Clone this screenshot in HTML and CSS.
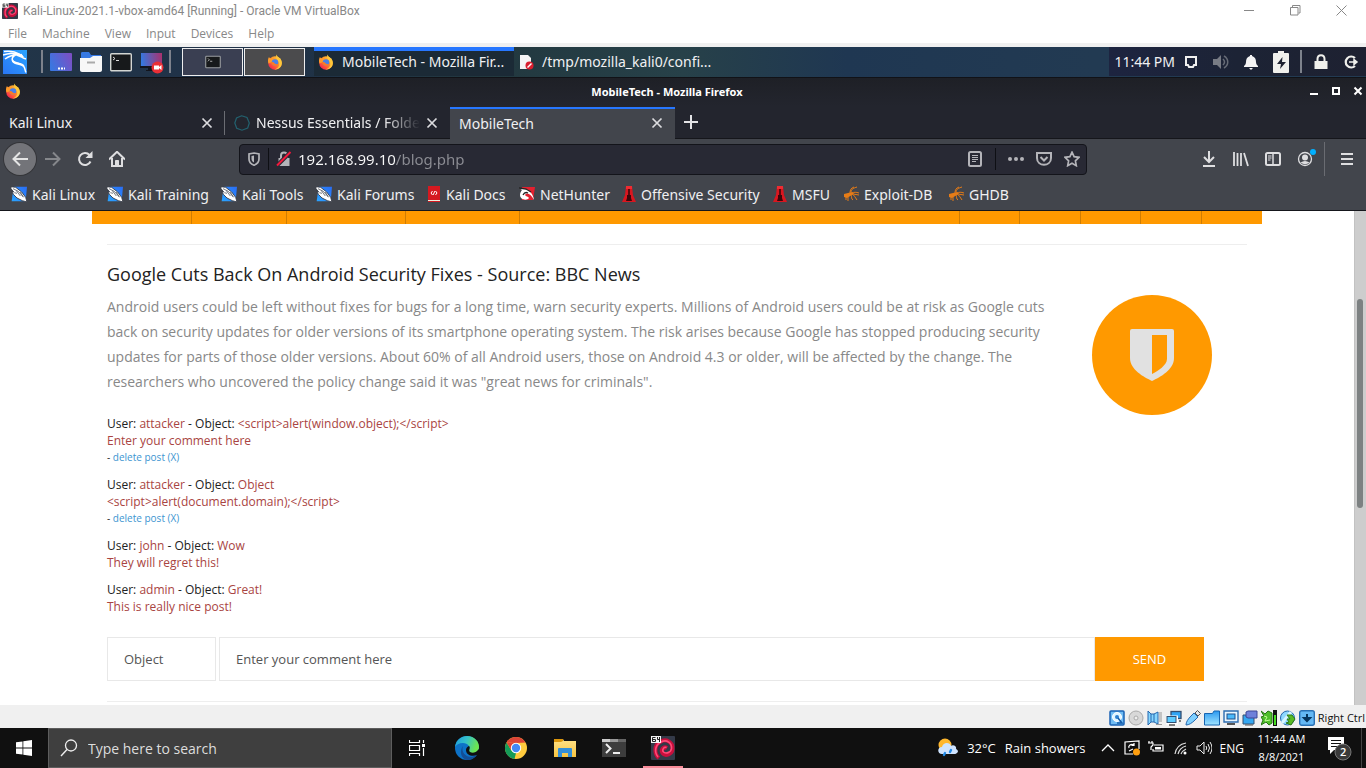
FILE: index.html
```html
<!DOCTYPE html>
<html lang="en">
<head>
<meta charset="utf-8">
<meta name="viewport" content="width=device-width, initial-scale=1">
<title>MobileTech</title>
<link rel="stylesheet" href="styles.css">
</head>
<body>
<svg class="sprite" width="0" height="0" aria-hidden="true">
  <defs>
    <linearGradient id="g-flame" x1="1" y1="0" x2="0.1" y2="1"><stop offset="0" stop-color="#ffe14d"/><stop offset=".4" stop-color="#ff9a2a"/><stop offset=".75" stop-color="#ff4a3d"/><stop offset="1" stop-color="#e5145f"/></linearGradient>
    <linearGradient id="g-kali" x1="0" y1="1" x2="1" y2="0"><stop offset="0" stop-color="#2a76f5"/><stop offset="1" stop-color="#2aa4ff"/></linearGradient>
    <linearGradient id="g-kali2" x1="0" y1="1" x2="1" y2="0"><stop offset="0" stop-color="#2aa4ff"/><stop offset="1" stop-color="#2a6cf5"/></linearGradient>
    <linearGradient id="g-desk" x1="0" y1="0.6" x2="1" y2="0.2"><stop offset="0" stop-color="#3b76e0"/><stop offset="1" stop-color="#7c4fc4"/></linearGradient>
    <linearGradient id="g-rec" x1="0" y1="0.4" x2="1" y2="0.3"><stop offset="0" stop-color="#3578e0"/><stop offset="1" stop-color="#a8326f"/></linearGradient>
    <linearGradient id="g-sky" x1="0" y1="0" x2="0" y2="1"><stop offset="0" stop-color="#2a98f0"/><stop offset="1" stop-color="#9fe4ff"/></linearGradient>
    <linearGradient id="g-edge" x1="0" y1="0" x2="1" y2="0.3"><stop offset="0" stop-color="#1c9be0"/><stop offset=".5" stop-color="#35c1c9"/><stop offset="1" stop-color="#6de650"/></linearGradient>
    <linearGradient id="g-folder" x1="0" y1="0" x2="0" y2="1"><stop offset="0" stop-color="#ffe28a"/><stop offset="1" stop-color="#f7c440"/></linearGradient>
    <symbol id="firefox" viewBox="0 0 32 32">
      <circle cx="16" cy="18" r="13.500" fill="url(#g-flame)"/>
      <path d="M19 1c1 4 4 5 7 8 5 5 5 13 0 18-3 3-8 4-11 4 8-3 11-8 9-14-1-3-4-5-5-8-1-3-1-6 0-8z" fill="#ffc83a"/>
      <path d="M4 6c1 2 3 3 5 3l3-3c0 3 1 4 4 5l-8 6-5 2C1 14 2 9 4 6z" fill="#ff9a2a"/>
      <circle cx="16" cy="17" r="6.500" fill="#4a80e8"/>
      <path d="M8 17c2-2 4-1 6 0 0 2 5 5 9 2-2 7-13 6-15-2z" fill="#ff7a22"/>
    </symbol>
    <symbol id="dragon" viewBox="0 0 24 24">
      <path d="M4 1h20l-2 22H1z" fill="url(#g-kali2)"/>
      <path d="M0 1l7 1 9 7 6 8 2 7-7-2-8-4-5-5-3-5 3 1-4-5z" fill="#fff" stroke="#323640" stroke-width="1.300"/>
      <path d="M3 4l8 4 8 9M5 10l4 1M8 7l6 8M14 9l4 7" stroke="#323640" stroke-width="1" fill="none"/>
    </symbol>
    <symbol id="tower" viewBox="0 0 14 16">
      <path d="M4 0h6l1 9 3 7H0l3-7z" fill="#d8161f"/><path d="M4 0h6v3H4z" fill="#f02b31"/>
      <path d="M7 3v10" stroke="#3a070b" stroke-width="1.600"/><path d="M5 9h4v3l1 3H4l1-3z" fill="#3a070b"/>
    </symbol>
    <symbol id="bug" viewBox="0 0 16 16">
      <path d="M1 8l4-1 4-1 2 1.500-3 2-4 2.500-3-1z" fill="#e67c17"/>
      <path d="M9 7c2-1 4-1 7 0M8 6c0-3 3-4 6-5M7 7c0-3 1-5 4-6M10 8l6 1M9 8c2 1 3 3 5 6M8 9c1 2 0 4 2 5M3 11v3M5 10v5" stroke="#e67c17" fill="none"/>
    </symbol>
    <symbol id="cross" viewBox="0 0 12 12"><path d="M1.500 1.500l9 9M10.500 1.500l-9 9" stroke="#dcdcdf" stroke-width="1.700" fill="none"/></symbol>
    <symbol id="swirl" viewBox="0 0 24 24">
      <rect width="24" height="24" rx="1" fill="#343a48"/>
      <path d="M8 22C3 18 3 9 9 6c6-4 13 0 12.500 7-.5 5-7 8-10 4-2-3 1-7 4.500-5" fill="none" stroke="#c80f3c" stroke-width="4"/>
      <path d="M7 21C3 16 4 9 10 6c6-3 11 1 10.500 6.500-.5 4-6 6-8.500 3-1-2 1-5 3.500-4" fill="none" stroke="#ff4a78" stroke-width="1.600"/>
      <rect width="10" height="7" fill="#f3f3f3"/><path d="M4.500 1.500h-3v4h3v-2h-3M6.500 1v2.500h2.500M8.500 1v5" stroke="#222" fill="none"/>
    </symbol>
  </defs>
</svg>

<div class="screen">
  <header class="vm-title">
    <svg class="i16" aria-hidden="true"><use href="#swirl"/></svg>
    <span class="vm-name">Kali-Linux-2021.1-vbox-amd64 [Running] - Oracle VM VirtualBox</span>
    <div class="vm-buttons">
      <button aria-label="Minimize"><svg class="i11" viewBox="0 0 11 11"><path d="M0 5.500h10" stroke="#888"/></svg></button>
      <button aria-label="Restore"><svg class="i11" viewBox="0 0 11 11"><path d="M.5 2.500h7.500v7.500H.5zM2.500 2V.5h7.500V8H8.500" fill="none" stroke="#888"/></svg></button>
      <button aria-label="Close"><svg class="i11" viewBox="0 0 11 11"><path d="M.5.5l10 10M10.500.5l-10 10" stroke="#888"/></svg></button>
    </div>
  </header>
  <nav class="vm-menu" aria-label="Machine window">
    <button>File</button><button>Machine</button><button>View</button><button>Input</button><button>Devices</button><button>Help</button>
  </nav>

  <div class="panel">
    <button class="kali-logo" aria-label="Applications"><svg class="i24" viewBox="0 0 24 24"><rect width="24" height="24" fill="url(#g-kali)"/><path d="M1 1.500c7-1 11 0 16 3M0 5c5-2 10-2 14-.5M2 9c4-3 8-4 12-4M14 4.500c-4 1-6 4-4 7 3 3 9 0 11 5 1 2 1 4 2 6M18 4l2 4 3 1" fill="none" stroke="#fff" stroke-width="1.500"/><path d="M14 4c3-1 5 0 7 3l-2 1-5-2z" fill="#fff"/><path d="M10 9c0 4 10 2 12 10-3-6-12-3-13-8z" fill="#fff"/></svg></button>
    <i class="rule"></i>
    <div class="launchers">
      <button aria-label="Show desktop"><svg class="i22" viewBox="0 0 22 22"><rect y="2" width="22" height="18" rx="1" fill="url(#g-desk)"/><path d="M8 17.500h2M11 17.500h2M14 17.500h1" stroke="#fff" stroke-width="2"/></svg></button>
      <button aria-label="Files"><svg class="i22" viewBox="0 0 22 22"><path d="M1 2c0-1 1-1 2-1h6l2 3h10v8H1z" fill="#3779e3"/><path d="M0 7h10l3-2h9v14c0 1-1 2-2 2H2c-1 0-2-1-2-2z" fill="#f7f7f7"/><path d="M7 11.500h8" stroke="#aaa" stroke-width="2"/></svg></button>
      <button aria-label="Terminal"><svg class="i22" viewBox="0 0 22 22"><rect x=".7" y="2.700" width="20.600" height="17" rx="1" fill="#17191b" stroke="#d3d6d3" stroke-width="1.400"/><path d="M3 6l2 1.500L3 9M6 9.500h3" fill="none" stroke="#ddd"/></svg></button>
      <button aria-label="Screen recorder"><svg class="i24" viewBox="0 0 24 24"><path d="M1 3h21v14H1z" fill="url(#g-rec)"/><path d="M0 16h22v2H0zM8 18h5v2H8zM6 20h10v1H6z" fill="#12141c"/><circle cx="17.500" cy="17.500" r="6" fill="#e92f36"/><path d="M14 15.500h5v4h-5zM19 17l2.500-2v5L19 18z" fill="#fff"/></svg></button>
    </div>
    <i class="rule"></i>
    <div class="workspaces">
      <button aria-label="Workspace 1"><svg class="i16" viewBox="0 0 22 22"><rect x="1" y="3" width="20" height="16" rx="1" fill="#17191b" stroke="#9a9da0" stroke-width="1.500"/><path d="M4 6l2 2-2 2M7 10h3" stroke="#ddd" fill="none"/></svg></button>
      <button class="current" aria-label="Workspace 2"><svg class="i16"><use href="#firefox"/></svg></button>
    </div>
    <div class="windows">
      <button class="active"><svg class="i16"><use href="#firefox"/></svg><span>MobileTech - Mozilla Fir...</span></button>
      <button><svg class="i16" viewBox="0 0 16 16"><path d="M2 1h8l3 3v11H2z" fill="#f4f4f4"/><circle cx="11.500" cy="11.500" r="4" fill="#d91e2e"/><path d="M9.500 13.500l4-4" stroke="#fff" stroke-width="1.500"/></svg><span>/tmp/mozilla_kali0/confi...</span></button>
    </div>
    <div class="tray">
      <time>11:44 PM</time>
      <svg class="i16" viewBox="0 0 16 16"><path d="M3 3h10v8h-2l-1 2H6l-1-2H3z" fill="none" stroke="#f0f0f0" stroke-width="2"/></svg>
      <svg class="i16" viewBox="0 0 16 16"><path d="M0 5h4l4-4v14l-4-4H0z" fill="#777b84"/><path d="M10 5c2 2 2 4 0 6M11 2c5 3 5 9 0 12" fill="none" stroke="#666b76" stroke-width="1.500"/></svg>
      <svg class="i16" viewBox="0 0 16 16"><path d="M7 1h2v1c3 1 4 3 4 6 0 2 1 3 2 4v1H1v-1c1-1 2-2 2-4 0-3 1-5 4-6zM6 14h4l-2 2z" fill="#f4f4f4"/></svg>
      <svg class="battery" viewBox="0 0 16 22"><path d="M1 2h4V0h6v2h4q1 0 1 1v18q0 1-1 1H1q-1 0-1-1V3q0-1 1-1z" fill="#f0f0ec"/><path d="M9.500 6L4 13h4l-1 5 6-7H9z" fill="#1e2230"/></svg>
      <i class="rule"></i>
      <svg class="i16" viewBox="0 0 16 16"><path d="M1.500 7h13v8h-13z" fill="#f0f0ec"/><path d="M4.500 8V5c0-5 7-5 7 0v3" fill="none" stroke="#f0f0ec" stroke-width="2"/></svg>
      <svg class="i16" viewBox="0 0 16 16"><path d="M12 4a5.500 5.500 0 1 0 0 8" fill="none" stroke="#f0f0ec" stroke-width="2.200"/><path d="M6 8h6M11 5.500L14 8l-3 2.500z" fill="#f0f0ec" stroke="#f0f0ec" stroke-width="1.500"/></svg>
    </div>
  </div>

  <div class="ff-title">
    <svg class="i16"><use href="#firefox"/></svg>
    <strong>MobileTech - Mozilla Firefox</strong>
    <div class="ff-buttons">
      <button aria-label="Minimize"><svg viewBox="0 0 10 10"><path d="M1 8h8" stroke="#fff" stroke-width="2"/></svg></button>
      <button aria-label="Maximize"><svg viewBox="0 0 10 10"><path d="M2 2h6v6H2z" fill="none" stroke="#fff" stroke-width="2"/></svg></button>
      <button aria-label="Close"><svg viewBox="0 0 10 10"><path d="M1.500 1.500l7 7M8.500 1.500l-7 7" stroke="#fff" stroke-width="2"/></svg></button>
    </div>
  </div>

  <div class="tabs">
    <div class="tab"><button class="tab-name">Kali Linux</button><button class="tab-close" aria-label="Close Kali Linux"><svg class="i12"><use href="#cross"/></svg></button></div>
    <div class="tab divided"><svg class="i16" viewBox="0 0 16 16"><path d="M7.500.8l5.500 1.700 2.300 5.500-1.600 5L8 15.200l-5.300-2L.8 8l1.700-5z" fill="none" stroke="#23616f" stroke-width="1.200"/></svg><button class="tab-name fade">Nessus Essentials / Folde</button><button class="tab-close" aria-label="Close Nessus"><svg class="i12"><use href="#cross"/></svg></button></div>
    <div class="tab selected"><button class="tab-name">MobileTech</button><button class="tab-close" aria-label="Close MobileTech"><svg class="i12"><use href="#cross"/></svg></button></div>
    <button class="tab-new" aria-label="New tab"><svg class="i14" viewBox="0 0 14 14"><path d="M7 0v14M0 7h14" stroke="#e3e3e6" stroke-width="2"/></svg></button>
  </div>

  <div class="toolbar">
    <div class="nav-buttons">
      <button class="back" aria-label="Back"><svg class="i16" viewBox="0 0 16 16"><path d="M16 8H1.500M8 1.500L1.500 8 8 14.500" fill="none" stroke="#e4e4e4" stroke-width="2"/></svg></button>
      <button aria-label="Forward"><svg class="i16" viewBox="0 0 16 16"><path d="M0 8h14.500M8 1.500L14.500 8 8 14.500" fill="none" stroke="#85878b" stroke-width="2"/></svg></button>
      <button aria-label="Reload"><svg class="i16" viewBox="0 0 16 16"><path d="M13.500 10.500A6 6 0 1 1 12.500 4L14 5.500" fill="none" stroke="#dedee0" stroke-width="2"/><path d="M15.500 0v7H8.500z" fill="#dedee0"/></svg></button>
      <button aria-label="Home"><svg class="i16" viewBox="0 0 16 16"><path d="M0 8.500l8-7.700 8 7.700M3 7v8h10V7" fill="none" stroke="#dedee0" stroke-width="2"/><path d="M6.500 15V9.500h3V15" fill="#dedee0" stroke="#dedee0"/></svg></button>
    </div>
    <div class="url">
      <svg class="i14" viewBox="0 0 14 14"><path d="M7 1l5 1v5c0 3-2 5-5 6.200C4 12 2 10 2 7V2z" fill="none" stroke="#b4b4b9" stroke-width="1.700"/><path d="M7 3.500v7C5 9.500 4.500 8 4.500 7V4z" fill="#b4b4b9"/></svg>
      <i class="url-rule identity"></i>
      <svg class="i16" viewBox="0 0 16 16"><path d="M2.500 7h11v8h-11z" fill="#b4b4b9"/><path d="M5 8V4.500C5 .5 11 .5 11 4.500V8" fill="none" stroke="#b4b4b9" stroke-width="2"/><path d="M1 14.500L14.500 1" stroke="#282934" stroke-width="4"/><path d="M1 14.500L14.500 1" stroke="#f5183c" stroke-width="2"/></svg>
      <input type="text" class="address" aria-label="Address" value="192.168.99.10/blog.php">
      <button aria-label="Reader view"><svg class="i16" viewBox="0 0 16 16"><rect x="2" y="1" width="12" height="14" rx="1.500" fill="none" stroke="#b4b4b9" stroke-width="2"/><path d="M5 4.500h6M5 6.500h6M5 8.500h6M5 10.500h4" stroke="#b4b4b9"/></svg></button>
      <i class="url-rule"></i>
      <button aria-label="Page actions"><svg class="i16" viewBox="0 0 16 16"><g fill="#b4b4b9"><circle cx="2" cy="8" r="2"/><circle cx="8" cy="8" r="2"/><circle cx="14" cy="8" r="2"/></g></svg></button>
      <button aria-label="Save to Pocket"><svg class="i16" viewBox="0 0 16 16"><path d="M1 2h14v5c0 9-14 9-14 0z" fill="none" stroke="#b4b4b9" stroke-width="2"/><path d="M4.500 6L8 9.500 11.500 6" fill="none" stroke="#b4b4b9" stroke-width="2"/></svg></button>
      <button aria-label="Bookmark"><svg class="i16" viewBox="0 0 16 16"><path d="M8 1.200l2.100 4.500 4.800.6-3.500 3.500.9 4.900L8 12.300l-4.300 2.400.9-4.900L1.100 6.300l4.800-.6z" fill="none" stroke="#b4b4b9" stroke-width="1.700"/></svg></button>
    </div>
    <div class="tools">
      <button aria-label="Downloads"><svg class="i16" viewBox="0 0 16 16"><path d="M8 0v11M3 6l5 5 5-5M2 15h12" fill="none" stroke="#dedee0" stroke-width="2"/></svg></button>
      <button aria-label="Library"><svg class="i16" viewBox="0 0 16 16"><path d="M1 1v14M4.500 2v13M8 2v13M11 2l4 13" fill="none" stroke="#dedee0" stroke-width="1.800"/></svg></button>
      <button aria-label="Sidebars"><svg class="i16" viewBox="0 0 16 16"><rect x="1" y="2" width="14" height="12" rx="1.500" fill="none" stroke="#dedee0" stroke-width="2"/><path d="M8 2v12" stroke="#dedee0" stroke-width="1.500"/><path d="M3 5h3.500M3 7h3.500M3 9h2.500" stroke="#dedee0"/></svg></button>
      <button class="account" aria-label="Account"><svg class="i16" viewBox="0 0 16 16"><circle cx="8" cy="8" r="6.500" fill="none" stroke="#dedee0" stroke-width="1.300"/><circle cx="8" cy="6.500" r="3" fill="#dedee0"/><path d="M3.500 11.500q4.500-3 9 0Q8 15 3.500 11.500z" fill="#dedee0"/></svg></button>
      <i class="tool-rule"></i>
      <button aria-label="Menu"><svg class="i12" viewBox="0 0 12 12"><path d="M0 1h12M0 6h12M0 11h12" stroke="#dedee0" stroke-width="2"/></svg></button>
    </div>
  </div>

  <nav class="bookmarks" aria-label="Bookmarks">
    <a href="#"><svg class="i16"><use href="#dragon"/></svg>Kali Linux</a>
    <a href="#"><svg class="i16"><use href="#dragon"/></svg>Kali Training</a>
    <a href="#"><svg class="i16"><use href="#dragon"/></svg>Kali Tools</a>
    <a href="#"><svg class="i16"><use href="#dragon"/></svg>Kali Forums</a>
    <a href="#"><svg class="i14" viewBox="0 0 14 16"><path d="M1 0h12v16H1z" fill="#d51920"/><path d="M1 14h12v1H1z" fill="#eed"/><path d="M5.500 5L4 7l1.500 2M8.500 9L10 7 8.500 5M8 5L6 9" fill="none" stroke="#fff"/></svg>Kali Docs</a>
    <a href="#"><svg class="i16" viewBox="0 0 16 16"><path d="M3 1h13l-2 13H3z" fill="#e3202f"/><path d="M0 2l6 1c5 1 8 5 9 11-3-6-7-8-9-5 1 2 3 1 4 3-2 3-9 2-9-3 0-2 1-4 2-5z" fill="#fff"/><path d="M0 2l7 1 5 3M4 9c1-2 3-3 5-2" stroke="#222" stroke-width="1.300" fill="none"/></svg>NetHunter</a>
    <a href="#"><svg class="i14"><use href="#tower"/></svg>Offensive Security</a>
    <a href="#"><svg class="i14"><use href="#tower"/></svg>MSFU</a>
    <a href="#"><svg class="i16"><use href="#bug"/></svg>Exploit-DB</a>
    <a href="#"><svg class="i16"><use href="#bug"/></svg>GHDB</a>
  </nav>

  <div class="viewport">
    <main class="page">
      <div class="site-nav"><i></i><i></i><i></i><i></i><i></i><i></i><i></i><i></i><i></i><i></i></div>
      <div class="container">
        <hr>
        <article class="post">
          <div class="post-text">
            <h2>Google Cuts Back On Android Security Fixes - Source: BBC News</h2>
            <p>Android users could be left without fixes for bugs for a long time, warn security experts. Millions of Android users could be at risk as Google cuts back on security updates for older versions of its smartphone operating system. The risk arises because Google has stopped producing security updates for parts of those older versions. About 60% of all Android users, those on Android 4.3 or older, will be affected by the change. The researchers who uncovered the policy change said it was "great news for criminals".</p>
          </div>
          <div class="badge"><svg viewBox="0 0 44 52" aria-hidden="true"><path d="M2 0h40q2 0 2 2v27c0 12-14 19-22 23C14 48 0 41 0 29V2q0-2 2-2z" fill="#e1e1e1"/><path d="M22 6h15v24c0 6-9 12-15 15z" fill="#ff9900"/></svg></div>
        </article>
        <section class="comments">
          <div class="comment"><p>User: <em>attacker</em> - Object: <em>&lt;script&gt;alert(window.object);&lt;/script&gt;</em></p><p><em>Enter your comment here</em></p><small>- <a href="#">delete post (X)</a></small></div>
          <div class="comment"><p>User: <em>attacker</em> - Object: <em>Object</em></p><p><em>&lt;script&gt;alert(document.domain);&lt;/script&gt;</em></p><small>- <a href="#">delete post (X)</a></small></div>
          <div class="comment"><p>User: <em>john</em> - Object: <em>Wow</em></p><p><em>They will regret this!</em></p></div>
          <div class="comment"><p>User: <em>admin</em> - Object: <em>Great!</em></p><p><em>This is really nice post!</em></p></div>
        </section>
        <form class="reply">
          <input class="object" type="text" aria-label="Object" value="Object">
          <input class="message" type="text" aria-label="Comment" value="Enter your comment here">
          <button type="button">SEND</button>
        </form>
        <hr>
      </div>
    </main>
    <div class="scrollbar"><div class="thumb"></div></div>
  </div>

  <footer class="vm-status">
    <svg class="i16" viewBox="0 0 16 16"><rect x="1" y="1" width="14" height="14" rx="1" fill="#6fbcf4" stroke="#1a62b4" stroke-width="1.500"/><circle cx="8" cy="7" r="4.500" fill="#dff4ff" stroke="#fff"/><circle cx="8" cy="7" r="2" fill="#2d7fd0"/><path d="M9 8l4 5H8" fill="none" stroke="#135aa8" stroke-width="1.500"/></svg>
    <svg class="i16" viewBox="0 0 16 16"><circle cx="8" cy="8" r="7" fill="#d8d8d8" stroke="#aaa"/><circle cx="8" cy="8" r="2" fill="#eee" stroke="#aaa"/></svg>
    <svg class="i16" viewBox="0 0 16 16"><path d="M1 1l3 3h3l4-2v12l-4-2H4l-3 3z" fill="#86d6ff" stroke="#2467ae"/><path d="M4 4v8M7 4v8" stroke="#2467ae"/><path d="M12 3h3M12 5h3M12 7h3M12 9h3M12 11h3M9 14.500h6" stroke="#999"/></svg>
    <svg class="i16" viewBox="0 0 16 16"><rect x="5" y="1.500" width="10" height="7" fill="#2fa5f5" stroke="#334e70" stroke-width="1.300"/><rect x="1" y="6.500" width="10" height="7" fill="#5ccbff" stroke="#fff" stroke-width="2"/><rect x="1" y="6.500" width="9" height="6" fill="#5ccbff" stroke="#334e70"/><path d="M3 15h6M13 11h2" stroke="#555" stroke-width="1.500"/></svg>
    <svg class="i16" viewBox="0 0 16 16"><path d="M1 15c0-3 2-6 5-9l3-3 4 4-3 3c-3 3-6 5-9 5z" fill="#7fd0ff" stroke="#2467ae"/><path d="M10 3l2.500-2.500 3 3L13 6z" fill="#e8e8e8" stroke="#555"/></svg>
    <svg class="i16" viewBox="0 0 16 16"><path d="M.5 15V3.500h8L10 1h5.500v14z" fill="url(#g-sky)" stroke="#1565b2"/></svg>
    <svg class="i16" viewBox="0 0 16 16"><path d="M1 1h14v11H1z" fill="#e9f6ff" stroke="#2d6cb0" stroke-width="1.400"/><rect x="4" y="4" width="8" height="5" fill="#4bb9fa" stroke="#1f4f8a"/><path d="M4 14h8" stroke="#555" stroke-width="2"/></svg>
    <svg class="i16" viewBox="0 0 16 16"><path d="M1 5h11v9H1z" fill="#35a7f0" stroke="#334e70"/><path d="M6 1h9v7H6l-2-1V2z" fill="#6e80da" stroke="#3c4796"/><path d="M3 15h8" stroke="#555"/></svg>
    <svg class="i16" viewBox="0 0 16 16"><path d="M0 1l4 3 3-3 4 2v10l-3 2-3-3-5 3 2-5-2-3 3-1z" fill="#4fbf2b" stroke="#267513"/><path d="M3 6l3 1-2 4 5-1" stroke="#c1ff93" fill="none"/><path d="M12 0h4v16h-4z" fill="#111"/><path d="M13 5h2v10h-2z" fill="#45db21"/></svg>
    <svg class="i16" viewBox="0 0 16 16"><circle cx="7.500" cy="8" r="7" fill="#8ed8ff" stroke="#2467ae"/><path d="M2 13L11 2" stroke="#d8f5ff" stroke-width="3"/><path d="M7 5h5l3 4-4 6-5-2 3-1-2-3h3z" fill="#58ba24" stroke="#2e7818"/></svg>
    <svg class="i16" viewBox="0 0 16 16"><rect x=".7" y=".7" width="14.600" height="14.600" rx="2" fill="#64b8f5" stroke="#2870b5" stroke-width="1.400"/><path d="M8 4v4M5 8h6l-3 3z" stroke="#06355f" stroke-width="2" fill="#06355f"/></svg>
    <span>Right Ctrl</span>
  </footer>

  <div class="taskbar">
    <button class="start" aria-label="Start"><svg class="i16" viewBox="0 0 16 16"><path d="M0 2.300L6.500 1.400v6.200H0zM7.300 1.300L16 0v7.600H7.300zM0 8.400h6.500v6.200L0 13.700zM7.300 8.400H16V16l-8.700-1.300z" fill="#fff"/></svg></button>
    <label class="search"><svg class="i18" viewBox="0 0 18 18"><circle cx="11" cy="6.500" r="5.500" fill="none" stroke="#eee" stroke-width="1.300"/><path d="M7 10.500L1 17" stroke="#eee" stroke-width="1.400"/></svg><input type="text" aria-label="Search" placeholder="Type here to search"></label>
    <div class="apps">
      <button class="task-view" aria-label="Task view"><svg class="i16" viewBox="0 0 16 16"><path d="M.5 0v2.500h10V0M.5 16v-2.500h10V16M.5 5.500h10v5H.5zM14.500 0v3M14.500 8v8" fill="none" stroke="#fff" stroke-width="1.200"/><path d="M13 4h3v3h-3z" fill="#fff"/></svg></button>
      <button aria-label="Edge"><svg class="i24" viewBox="0 0 24 24"><circle cx="12" cy="12" r="12" fill="#0d72c7"/><path d="M0 11C1 4 6 0 12 0c8 0 12 6 12 11 0 4-3 6-6 6-4 0-5-1-4-3 2-3-1-7-6-7-4 0-7 2-8 4z" fill="url(#g-edge)"/><path d="M8 10c-2 6 2 11 9 11l5-2c-3 4-7 5-10 5-6-1-8-9-4-14z" fill="#134e96"/><path d="M14 10c2 2-1 4 1 6 2 1 5 1 7-1l2-2v5l-2 1c-5 2-11 0-11-5 0-2 1-3 3-4z" fill="#101010"/></svg></button>
      <button aria-label="Chrome"><svg class="i22" viewBox="0 0 22 22"><circle cx="11" cy="11" r="11" fill="#ffcb3d"/><path d="M1.500 5.500A11 11 0 0 1 20.500 5.500L11 6z" fill="#dc4437"/><path d="M1.500 5.500L6.500 13.500 11 16 9.500 22A11 11 0 0 1 1.500 5.500z" fill="#159b58"/><path d="M1.500 5.500L6 13 9 6h11.500z" fill="#dc4437"/><circle cx="11" cy="11" r="5.200" fill="#fff"/><circle cx="11" cy="11" r="4.200" fill="#4389f5"/></svg></button>
      <button aria-label="File Explorer"><svg class="i22" viewBox="0 0 22 22"><path d="M0 2h9l1 2h12v16H0z" fill="url(#g-folder)"/><path d="M0 2h9v2l-2 1H0z" fill="#dc960c"/><path d="M4 20v-8q0-1 1-1h12q1 0 1 1v8h-4v-4H8v4z" fill="#348fd8"/></svg></button>
      <button aria-label="Terminal"><svg class="i24" viewBox="0 0 24 24"><path d="M0 3h24v18H0z" fill="#3d3d3d"/><path d="M0 3h8v3H0z" fill="#ccc"/><path d="M8 3h8v3H8z" fill="#999"/><path d="M16 3h8v3h-8z" fill="#666"/><path d="M4 8l4.500 4.500L4 17M11 17h7" stroke="#eee" stroke-width="2" fill="none"/></svg></button>
      <button class="running" aria-label="VirtualBox"><svg class="i24"><use href="#swirl"/></svg></button>
    </div>
    <div class="system">
      <div class="weather"><svg class="i20" viewBox="0 0 20 20"><circle cx="7" cy="7" r="6.500" fill="#ffb72e"/><path d="M4 16c-5 0-5-7 0-7 1-5 8-5 9-1 2-2 6 0 5 3 4 2 1 5-1 5z" fill="#cfe4ff"/><path d="M7 15l-1 2M13 12l-1 2" stroke="#218ae8" stroke-width="2.400" stroke-linecap="round"/></svg><span>32°C</span><span>Rain showers</span></div>
      <div class="indicators">
        <svg class="i16" viewBox="0 0 16 16"><path d="M2 11l6-6 6 6" fill="none" stroke="#fff" stroke-width="1.300"/></svg>
        <svg class="i16" viewBox="0 0 16 16"><path d="M9 14H1V2l14-1v8M10 5C7 3 4 6 5 8M10 3v2.500H7.500M5 11l4-2" fill="none" stroke="#fff" stroke-width="1.200"/><circle cx="12.500" cy="12" r="3.500" fill="#ff9f0f"/></svg>
        <svg class="i16" viewBox="0 0 16 16"><path d="M6 5h9v6H5V9M1 1v2M4 1v2M0 3h5v2L3 7v3" fill="none" stroke="#fff" stroke-width="1.200"/><path d="M7 7h6v2.500H7z" fill="#fff"/></svg>
        <svg class="i16" viewBox="0 0 16 16"><path d="M3 14C4 8 8 4 14 3M6 14c1-4 4-7 8-8M9 14c1-3 3-4 5-5" fill="none" stroke="#ddd" stroke-width="1.200"/><circle cx="13" cy="13" r="1.500" fill="#fff"/></svg>
        <svg class="i16" viewBox="0 0 16 16"><path d="M1 6h3l4-4v12l-4-4H1zM10 6q1.500 2 0 4M12 4q3 4 0 8M14 2q4 6 0 12" fill="none" stroke="#eee"/></svg>
        <span>ENG</span>
      </div>
      <time class="clock"><span>11:44 AM</span><span>8/8/2021</span></time>
      <button class="notice" aria-label="2 notifications"><svg viewBox="0 0 26 26"><path d="M1 2h16v13H7l-4 4v-4H1z" fill="#fff"/><path d="M4 5.500h10M4 8.500h10M4 11.500h7" stroke="#111"/><circle cx="16" cy="17" r="8" fill="#3a3a3a" stroke="#777"/></svg><b>2</b></button>
    </div>
  </div>
</div>
</body>
</html>
```
FILE: styles.css
```css
* { box-sizing: border-box; }
body { margin: 0; font-family: "Open Sans", sans-serif; background: #fff; }
button { margin: 0; padding: 0; border: 0; background: none; color: inherit; font: inherit; }
input { margin: 0; font: inherit; outline: 0; border-radius: 0; }
button { display: flex; align-items: center; }
a { text-decoration: none; }
svg { display: block; flex: none; }
i, em { font-style: normal; }
.sprite { position: absolute; }
.i11 { width: 11px; height: 11px; }
.i12 { width: 12px; height: 12px; }
.i14 { width: 14px; height: 16px; }
.i16 { width: 16px; height: 16px; }
.i18 { width: 18px; height: 18px; }
.i20 { width: 20px; height: 20px; }
.i22 { width: 22px; height: 22px; }
.i24 { width: 24px; height: 24px; }

.screen { display: flex; flex-direction: column; height: 100vh; overflow: hidden; }
.screen > * { flex: none; }

/* Virtual machine window */
.vm-title { display: flex; align-items: center; height: 24px; padding: 0 19px 3px 2px; gap: 5px; color: #888; font-family: Roboto, sans-serif; font-size: 12px; }
.vm-name { flex: 1; white-space: nowrap; }
.vm-buttons { display: flex; gap: 35px; }
.vm-menu { display: flex; align-items: center; gap: 15px; height: 23px; padding: 0 8px; border-bottom: 4px solid #f0f0f0; color: #888; font-size: 12px; }

/* Desktop panel */
.panel, .ff-title, .tabs, .toolbar, .bookmarks { font-family: "Noto Sans", sans-serif; font-size: 14px; color: #f0f0f2; }
.panel { display: flex; align-items: center; height: 31px; padding: 0 0 1px 3px; background: linear-gradient(90deg, #223548 0, #1f3148 20%, #22383f 36%, #274149 50%, #1f3752 62%, #223a52 80%); border-bottom: 1px solid #111217; }
.rule { width: 2px; height: 23px; background: #7d828c; }
.kali-logo { margin-right: 14px; }
.launchers { display: flex; gap: 8px; padding: 0 5px 0 7px; }
.workspaces { display: flex; gap: 1px; margin-left: 11px; align-self: stretch; padding-top: 1px; }
.workspaces button { width: 61px; justify-content: center; border: 1px solid #eee; background: #3a3f52; }
.workspaces .current { background: #4b4b4d; }
.windows { display: flex; align-self: stretch; flex: 1; margin-left: 9px; }
.windows button { width: 200px; padding-left: 4px; gap: 8px; }
.windows button:not(.active) { width: 210px; }
.windows .active { background: #1b2a36; box-shadow: inset 0 4px #2777ff; }
.windows span { white-space: nowrap; }
.tray { display: flex; align-items: center; align-self: stretch; gap: 14px; padding: 0 7px 0 5px; background: linear-gradient(90deg, #1d2440, #1c2335 50%, #1e2131); }
.tray time { margin-right: -6px; white-space: nowrap; }
.battery { width: 16px; height: 22px; }
.tray .rule { margin: 0 -3px; }

/* Firefox chrome */
.ff-title { display: grid; grid-template-columns: 60px 1fr 60px; align-items: center; height: 28px; padding: 0 3px 2px 5px; background: linear-gradient(#1e2026, #23252e); font-size: 11px; }
.ff-title strong { text-align: center; color: #fff; padding-right: 34px; }
.ff-buttons { display: flex; gap: 12px; justify-content: flex-end; }
.ff-buttons svg { width: 10px; height: 10px; }
.tabs { display: flex; align-items: stretch; height: 33px; background: #23252e; border-bottom: 1px solid #15161b; }
.tab { display: flex; align-items: center; width: 225px; padding: 1px 12px 0 9px; gap: 6px; }
.tab.divided { padding: 1px 11px 0 10px; background: linear-gradient(#6b6d73, #6b6d73) 0 5px / 1px 24px no-repeat; margin-left: -1px; }
.tab-name { flex: 1; min-width: 0; white-space: nowrap; align-self: stretch; }
.fade { -webkit-mask-image: linear-gradient(90deg, #000 78%, transparent); mask-image: linear-gradient(90deg, #000 78%, transparent); }
.tab.selected { margin: 1px 0 -1px 1px; background: #42454c; border-top: 2px solid #2777ff; padding: 0 12px 2px 9px; }
.tab-new { padding: 0 9px; }
.toolbar { display: flex; align-items: center; height: 41px; padding: 0 13px 1px 4px; background: #42454c; }
.nav-buttons { display: flex; align-items: center; gap: 16px; }
.back { width: 32px; height: 32px; margin-right: -7px; justify-content: center; border-radius: 50%; background: #737479; box-shadow: 0 0 0 1px #343539; }
.url { display: flex; align-items: center; flex: 1; gap: 12px; height: 31px; margin: 0 114px; padding: 0 6px 0 7px; border: 1px solid #13141a; border-radius: 4px; background: #282934; }
.url-rule { width: 1px; height: 22px; background: #0e0f14; }
.identity { margin: 0 -5px; }
.address { flex: 1; min-width: 0; height: 24px; margin-left: -6px; padding: 0; border: 0; font-size: 15px; color: transparent; background: linear-gradient(90deg, #fafafa 98px, #8c8d94 98px); -webkit-background-clip: text; background-clip: text; }
.tools { display: flex; align-items: center; gap: 16px; }
.account { position: relative; }
.account::after { content: ""; position: absolute; left: 13px; top: -2px; width: 6px; height: 6px; border-radius: 50%; background: #00b0ff; }
.tool-rule { width: 1px; height: 34px; margin-left: -5px; background: #6a6c72; }
.bookmarks { display: grid; grid-template-columns: 96px 114px 95px 111px 92px 103px 151px 70px 105px auto; align-items: center; height: 31px; padding: 0 0 2px 11px; background: #42454c; border-bottom: 1px solid #15161b; }
.bookmarks a { display: flex; align-items: center; gap: 5px; color: #f0f0f2; white-space: nowrap; }

/* Blog page */
.screen > .viewport { display: flex; flex: 1; min-height: 0; }
.page { flex: 1; min-width: 0; overflow: hidden; color: #333; }
.site-nav, .container { max-width: 1170px; margin: 0 auto; }
.site-nav { display: grid; grid-template-columns: 100px 95px 119px 114px 1fr 60px 61px 60px 61px 60px; height: 13px; background: #ff9900; }
.site-nav i { border-right: 1px solid #d07d02; }
.site-nav i:last-child { border: 0; }
.container { padding: 0 15px; }
hr { height: 1px; margin: 20px 0; border: 0; background: #eee; }
.post { display: flex; align-items: flex-start; gap: 40px; padding-right: 35px; }
.post-text { flex: 1; }
h2 { margin: 0 0 11px; font-size: 18px; line-height: 18px; font-weight: 400; color: #222; }
.post p { margin: 0; font-size: 14px; line-height: 25px; color: #888; }
.badge { display: flex; align-items: center; justify-content: center; width: 120px; height: 120px; margin-top: 30px; border-radius: 50%; background: #ff9900; }
.badge svg { width: 44px; height: 52px; }
.comments { font-size: 12px; line-height: 17px; color: #222; }
.comment { margin-bottom: 10px; }
.comment p { margin: 0; }
.comment em { color: #a94442; }
.comment small { display: block; font-size: 10px; line-height: 17px; }
.comment a { color: #3d95d1; }
.reply { display: flex; padding: 12px 43px 0 0; font-size: 13px; }
.reply input { height: 44px; padding: 0 16px; border: 1px solid #e8e8e8; color: #555; background: #fff; }
.object { width: 109px; margin-right: 3px; }
.message { flex: 1; min-width: 0; }
.reply button { width: 109px; justify-content: center; background: #ff9900; color: #fff; }
.scrollbar { width: 12px; padding: 88px 3px 0 2px; background: #cdcdcd; border-left: 1px solid #c2c2c2; }
.thumb { height: 209px; border-radius: 3px; background: #7d8182; }

/* Machine status bar */
.vm-status { display: flex; align-items: center; justify-content: flex-end; gap: 3px; height: 23px; padding: 2px 1px 0 0; background: #f0f0f0; color: #111; font-size: 11px; white-space: nowrap; }

/* Windows taskbar */
.taskbar { display: flex; height: 40px; background: #101010; color: #fff; font-size: 12px; }
.start { width: 48px; justify-content: center; }
.search { display: flex; align-items: center; gap: 10px; width: 344px; padding: 0 11px; border: 1px solid #5d5d5d; background: #3f3f3f; }
.search input { flex: 1; min-width: 0; padding: 0; border: 0; background: none; color: #ddd; font-size: 14px; }
.search input::placeholder { color: #ddd; opacity: 1; }
.apps { display: flex; gap: 9px; padding-left: 4px; }
.apps button { width: 40px; justify-content: center; }
.apps .task-view { width: 42px; }
.apps .running { box-shadow: inset 0 -2px #f98c99; }
.system { display: flex; align-items: center; margin-left: auto; white-space: nowrap; }
.weather { display: flex; align-items: center; gap: 9px; margin-right: 14px; font-size: 13px; }
.indicators { display: flex; align-items: center; gap: 8px; }
.clock { display: flex; flex-direction: column; align-items: center; width: 75px; line-height: 18px; font-size: 11px; }
.notice { position: relative; width: 43px; height: 40px; padding-left: 8px; border-right: 1px solid #444; margin-right: 4px; }
.notice svg { width: 26px; height: 26px; }
.notice b { position: absolute; left: 21px; top: 16px; font-size: 11px; font-weight: 600; }
```
